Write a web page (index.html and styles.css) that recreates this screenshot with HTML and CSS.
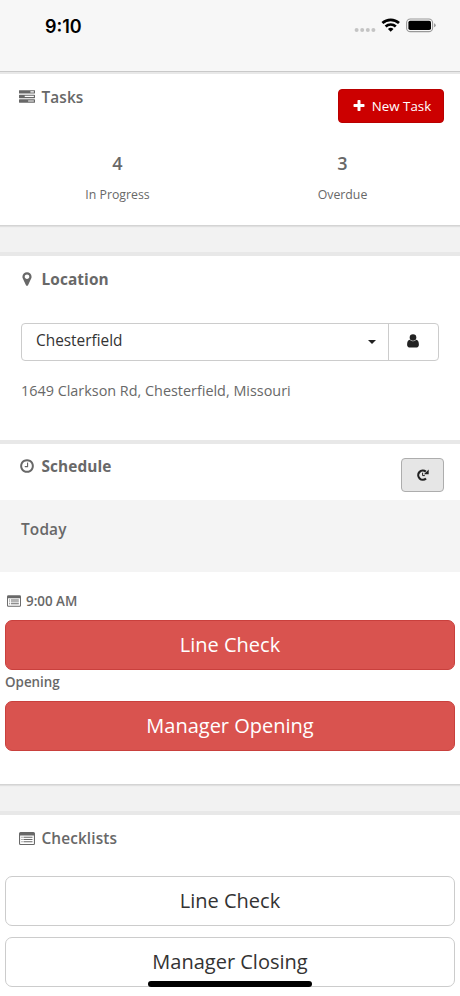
FILE: index.html
```html
<!DOCTYPE html>
<html lang="en">
<head>
<meta charset="utf-8">
<title>Tasks</title>
<link rel="stylesheet" href="styles.css">
</head>
<body>
<header class="status">
  <span class="clock">9:10</span>
  <svg class="indicators" width="84" height="20" viewBox="0 0 84 20" aria-hidden="true">
    <g fill="#c4c4c4"><circle cx="4.6" cy="15" r="2"/><circle cx="10.2" cy="15" r="2"/><circle cx="15.8" cy="15" r="2"/><circle cx="21.4" cy="15" r="2"/></g>
    <g fill="none" stroke="#000" stroke-width="2.7"><path d="M30.4 8.1a12.2 12.2 0 0 1 16.6 0"/><path d="M33.6 11.5a7.5 7.5 0 0 1 10.2 0"/></g>
    <path d="M38.7 16.8L35.9 14a4 4 0 0 1 5.6 0z"/>
    <rect x="54.6" y="4" width="26" height="12.6" rx="3.7" fill="none" stroke="#999" stroke-width="1.1"/>
    <rect x="56.4" y="5.7" width="22.6" height="9.3" rx="1.8"/>
    <path d="M82.2 8.3q1.4 .5 1.4 2t-1.4 2z" fill="#888"/>
  </svg>
</header>
<main>
  <section class="panel tasks">
    <div class="head">
      <h2 class="title medium"><svg class="icon" viewBox="0 0 1792 1792"><path d="M1024 1408h640v-128h-640v128zm-384-512h1024v-128h-1024v128zm640-512h384v-128h-384v128zm512 832v256q0 26-19 45t-45 19h-1664q-26 0-45-19t-19-45v-256q0-26 19-45t45-19h1664q26 0 45 19t19 45zm0-512v256q0 26-19 45t-45 19h-1664q-26 0-45-19t-19-45v-256q0-26 19-45t45-19h1664q26 0 45 19t19 45zm0-512v256q0 26-19 45t-45 19h-1664q-26 0-45-19t-19-45v-256q0-26 19-45t45-19h1664q26 0 45 19t19 45z"/></svg><span>Tasks</span></h2>
      <button class="new-task"><svg width="14" height="14" viewBox="0 0 1792 1792"><path d="M1600 736v192q0 40-28 68t-68 28h-416v416q0 40-28 68t-68 28h-192q-40 0-68-28t-28-68v-416h-416q-40 0-68-28t-28-68v-192q0-40 28-68t68-28h416v-416q0-40 28-68t68-28h192q40 0 68 28t28 68v416h416q40 0 68 28t28 68z"/></svg><span>New Task</span></button>
    </div>
    <div class="stats">
      <div class="stat"><strong>4</strong><span>In Progress</span></div>
      <div class="stat"><strong>3</strong><span>Overdue</span></div>
    </div>
  </section>
  <section class="panel location">
    <h2 class="title"><svg class="icon" viewBox="0 0 1792 1792"><path d="M1152 640q0-106-75-181t-181-75-181 75-75 181 75 181 181 75 181-75 75-181zm256 0q0 109-33 179l-364 774q-16 33-47.5 52t-67.5 19-67.5-19-46.5-52l-365-774q-33-70-33-179 0-212 150-362t362-150 362 150 150 362z"/></svg><span>Location</span></h2>
    <div class="picker">
      <div class="select"><span>Chesterfield</span><i class="caret"></i></div>
      <button class="person"><svg width="14" height="16" viewBox="0 0 14 16"><circle cx="7" cy="4.5" r="3.3"/><path d="M3.8 6.8q3.2 3 6.4 0C12.1 7.3 12.9 9 12.9 11.6Q12.9 14.4 10.7 14.4H3.3Q1.1 14.4 1.1 11.6C1.1 9 1.9 7.3 3.8 6.8z"/></svg></button>
    </div>
    <p class="address">1649 Clarkson Rd, Chesterfield, Missouri</p>
  </section>
  <section class="panel schedule">
    <div class="head">
      <h2 class="title"><svg class="icon" viewBox="0 0 1792 1792"><path d="M1024 544v448q0 14-9 23t-23 9h-320q-14 0-23-9t-9-23v-64q0-14 9-23t23-9h224v-352q0-14 9-23t23-9h64q14 0 23 9t9 23zm416 352q0-148-73-273t-198-198-273-73-273 73-198 198-73 273 73 273 198 198 273 73 273-73 198-198 73-273zm224 0q0 209-103 385.5t-279.5 279.5-385.5 103-385.5-103-279.5-279.5-103-385.5 103-385.5 279.5-279.5 385.5-103 385.5 103 279.5 279.5 103 385.5z"/></svg><span>Schedule</span></h2>
      <button class="refresh"><svg width="14" height="14" viewBox="0 0 14 14"><path d="M10 10.5A4.6 4.6 0 1 1 9.8 3.6" fill="none" stroke="#222" stroke-width="2.2"/><path d="M12.7 1.4V6.2H7.9z"/><path d="M6.6 4.7V7.6H8.8" fill="none" stroke="#222" stroke-width="1"/></svg></button>
    </div>
    <div class="today">Today</div>
    <div class="entries">
      <div class="time"><svg width="14" height="12" viewBox="0 0 16 13"><path fill-rule="evenodd" d="M1.5 0h13Q16 0 16 1.5v10q0 1.5-1.5 1.5h-13Q0 13 0 11.5v-10Q0 0 1.5 0zM1.1 3.4v8q0 .5.5.5h12.8q.5 0 .5-.5v-8z"/><path d="M2.5 4.8h1v1h-1zm2 0h9v1h-9zM2.5 7h1v1h-1zm2 0h9v1h-9zM2.5 9.2h1v1h-1zm2 0h9v1h-9z"/></svg><span>9:00 AM</span></div>
      <button class="row red">Line Check</button>
      <div class="label">Opening</div>
      <button class="row red">Manager Opening</button>
    </div>
  </section>
  <section class="panel checklists">
    <h2 class="title medium"><svg class="icon list" viewBox="0 0 16 13"><path fill-rule="evenodd" d="M1.5 0h13Q16 0 16 1.5v10q0 1.5-1.5 1.5h-13Q0 13 0 11.5v-10Q0 0 1.5 0zM1.1 3.4v8q0 .5.5.5h12.8q.5 0 .5-.5v-8z"/><path d="M2.5 4.8h1v1h-1zm2 0h9v1h-9zM2.5 7h1v1h-1zm2 0h9v1h-9zM2.5 9.2h1v1h-1zm2 0h9v1h-9z"/></svg><span>Checklists</span></h2>
    <div class="rows">
      <button class="row">Line Check</button>
      <button class="row">Manager Closing</button>
    </div>
  </section>
</main>
<div class="home-bar"></div>
</body>
</html>
```
FILE: styles.css
```css
* { box-sizing: border-box; }
html, body { height: 100%; }
body {
  margin: 0;
  position: relative;
  overflow: hidden;
  background: #f2f2f2;
  color: #686868;
  font-family: "Open Sans", sans-serif;
}
button { font: inherit; margin: 0; padding: 0; display: flex; align-items: center; justify-content: center; }
svg { display: block; flex: none; fill: currentColor; }
h2, p { margin: 0; }

.status {
  height: 72px;
  display: flex;
  justify-content: space-between;
  padding: 15px 24px 0 45px;
  background: #f7f7f7;
  border-bottom: 1px solid #c9c9c9;
}
.clock { font: 600 18px/23px Inter, sans-serif; color: #000; }
.indicators { fill: #000; }

.panel { background: #fff; border-top: 4px solid #e8e8e8; }
.head { display: flex; justify-content: space-between; }
.title { display: flex; align-items: center; height: 22px; font-size: 15.4px; font-weight: 700; letter-spacing: .1px; line-height: 22px; }
.title span { margin-top: 2px; }
.title.medium { font-weight: 550; }
.icon { width: 16px; height: 16px; margin: 0 7px 0 .5px; }
.icon.list { height: 13px; }

.tasks { height: 154px; border-top-width: 2px; border-bottom: 1px solid #d4d4d4; box-shadow: 0 1px 1px #e0e0e0; }
.tasks .head { padding: 12px 16px 0 18px; }
.new-task {
  width: 106px; height: 34px; margin-top: 3px; padding: 0 0 1px 1px;
  border: 1px solid #b90000; border-radius: 4px;
  background: #c00; color: #fff; font-size: 13.3px; gap: 6px;
}
.stats { display: flex; justify-content: space-between; padding: 27px 5px 0; }
.stat { width: 225px; display: flex; flex-direction: column; align-items: center; font-size: 12.3px; line-height: 18px; }
.stat strong { font-size: 18px; font-weight: 550; line-height: 26px; margin-bottom: 10px; }

.location { height: 188px; margin-top: 26px; padding: 12px 21px 0; }
.location .title { margin-left: -3px; }
.picker { display: flex; height: 38px; margin-top: 33px; border: 1px solid #ccc; border-radius: 4px; color: #333; }
.select { flex: 1; display: flex; align-items: center; justify-content: space-between; padding: 0 12px 3px 14px; font-size: 15.4px; }
.caret { margin-top: 3px; border: 4.5px solid transparent; border-top-color: #222; border-bottom: 0; }
.person { width: 50px; padding: 0 1px 2px 0; border: 0; border-left: 1px solid #ccc; background: none; color: #222; }
.address { margin-top: 19px; font-size: 14.4px; line-height: 22px; }

.schedule { height: 345px; border-bottom: 1px solid #d4d4d4; box-shadow: 0 1px 1px #e0e0e0; }
.schedule .head { height: 56px; padding: 11px 16px 0 18px; }
.refresh { width: 43px; height: 34px; margin-top: 3px; border: 1px solid #adadad; border-radius: 4px; background: #e6e6e6; color: #222; }
.today { height: 72px; padding: 19px 21px; background: #f4f4f4; font-size: 15.4px; font-weight: 550; letter-spacing: .15px; line-height: 22px; }
.entries { padding: 19px 5px 0; font-size: 13.4px; font-weight: 550; }
.time { display: flex; align-items: center; gap: 5px; height: 20px; margin: 0 0 8.5px 2px; }
.label { height: 31px; line-height: 25px; }
.row {
  width: 100%; height: 50px; padding-bottom: 1px;
  border: 1px solid #ccc; border-radius: 7px; background: #fff;
  color: #333; font-size: 20px; font-weight: 400;
}
.row.red { border-color: #c9403d; background: #d9534f; color: #fff; }

.checklists { height: 200px; margin-top: 26px; padding: 12px 5px 0; }
.checklists .title { margin-left: 13px; }
.rows { display: grid; gap: 11px; margin-top: 27px; }
.home-bar { position: absolute; left: 148px; top: 981px; width: 164px; height: 6px; border-radius: 3px; background: #000; }
```
